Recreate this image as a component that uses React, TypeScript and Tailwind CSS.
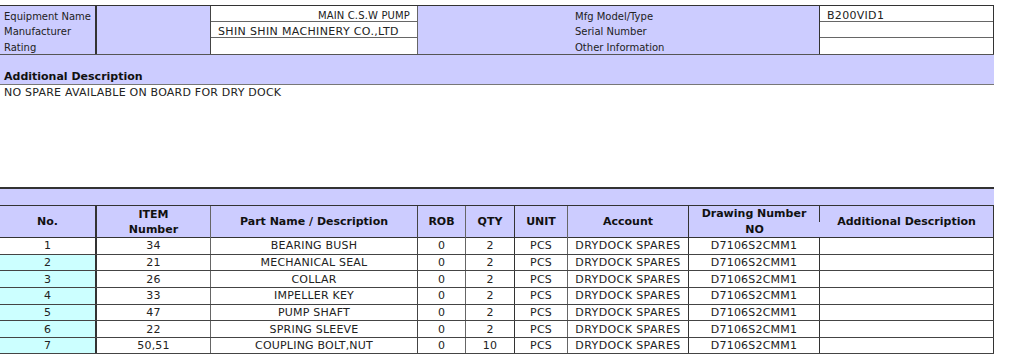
import React from "react";

const parts = [
  { no: "1", item: "34", name: "BEARING BUSH", qty: "2" },
  { no: "2", item: "21", name: "MECHANICAL SEAL", qty: "2" },
  { no: "3", item: "26", name: "COLLAR", qty: "2" },
  { no: "4", item: "33", name: "IMPELLER KEY", qty: "2" },
  { no: "5", item: "47", name: "PUMP SHAFT", qty: "2" },
  { no: "6", item: "22", name: "SPRING SLEEVE", qty: "2" },
  { no: "7", item: "50,51", name: "COUPLING BOLT,NUT", qty: "10" },
];

const cols = "grid grid-cols-[97px_114px_207px_48px_49px_53px_121px_131px_174px]";
const cell = "flex items-center justify-center";

export default function App() {
  return (
    <div className="w-[1024px] h-[363px] bg-white overflow-hidden pt-[5px] text-[10px] leading-none text-[#222] font-['DejaVu_Sans',Verdana,sans-serif]">
      {/* ── Equipment header ── */}
      <div className="w-[994px] grid grid-cols-[97px_114px_207px_402px_174px] border-t border-t-[#333] border-b border-b-[#555] bg-[#ccccff]">
        <div className="border-r-2 border-r-[#333] pl-[4px] flex flex-col">
          <div className="h-[16px] flex items-center pt-[5px]">Equipment Name</div>
          <div className="h-[16px] flex items-center pt-[3px]">Manufacturer</div>
          <div className="h-[16px] flex items-center pt-[3px]">Rating</div>
        </div>
        <div className="border-r border-r-[#444]" />
        <div className="bg-white border-r border-r-[#666] flex flex-col">
          <div className="h-[16px] border-b border-b-[#666] flex items-center justify-end pr-[7px] pt-[4px] tracking-[0.15px]">MAIN C.S.W PUMP</div>
          <div className="h-[16px] border-b border-b-[#666] flex items-center pl-[7px] pt-[3px] text-[11px] tracking-[0.35px]">SHIN SHIN MACHINERY CO.,LTD</div>
          <div className="h-[16px]" />
        </div>
        <div className="border-r border-r-[#333] pl-[157px] flex flex-col">
          <div className="h-[16px] flex items-center pt-[5px]">Mfg Model/Type</div>
          <div className="h-[16px] flex items-center pt-[3px]">Serial Number</div>
          <div className="h-[16px] flex items-center pt-[3px]">Other Information</div>
        </div>
        <div className="bg-white border-r border-r-[#333] flex flex-col">
          <div className="h-[16px] border-b border-b-[#666] flex items-center pl-[7px] pt-[4px] text-[11px] tracking-[0.3px]">B200VID1</div>
          <div className="h-[16px] border-b border-b-[#666]" />
          <div className="h-[16px]" />
        </div>
      </div>

      {/* ── Additional description ── */}
      <div className="w-[994px] h-[30px] bg-[#ccccff] border-b border-b-[#777] flex items-end pl-[4px]">
        <span className="text-[11px] font-bold text-[#111] leading-[14px]">Additional Description</span>
      </div>
      <div className="h-[15px] flex items-center pl-[4px] text-[11px] tracking-[0.22px]">NO SPARE AVAILABLE ON BOARD FOR DRY DOCK</div>

      {/* ── Spare parts ── */}
      <div className="mt-[87px] w-[994px]">
        <div className="h-[19px] bg-[#ccccff] border-t-2 border-t-[#333] border-b border-b-[#333]" />
        <div className={`${cols} h-[32px] bg-[#ccccff] border-b border-b-[#333] text-[11px] font-bold text-[#111] text-center leading-[15px]`}>
          <div className={`border-r-2 border-r-[#333] ${cell} pb-[1px]`}>No.</div>
          <div className="border-r border-r-[#666] flex flex-col items-center justify-center pb-[1px]">
            <span>ITEM</span>
            <span>Number</span>
          </div>
          <div className={`border-r border-r-[#444] ${cell} pb-[1px]`}>Part Name / Description</div>
          <div className={`border-r border-r-[#666] ${cell} pb-[1px]`}>ROB</div>
          <div className={`border-r border-r-[#333] ${cell} pb-[1px]`}>QTY</div>
          <div className={`border-r border-r-[#666] ${cell} pb-[1px]`}>UNIT</div>
          <div className={`border-r border-r-[#333] ${cell} pb-[1px]`}>Account</div>
          <div className="flex flex-col">
            <div className="h-[16px] border-r border-r-[#333] flex items-end justify-center pb-[1px]">Drawing Number</div>
            <div className="h-[16px] flex items-center justify-center pb-[1px]">NO</div>
          </div>
          <div className={`border-r border-r-[#333] ${cell} pb-[1px]`}>Additional Description</div>
        </div>
        {parts.map((p, i) => (
          <div key={p.no} className={`${cols} h-[16.65px] border-b border-b-[#444] text-center text-[11px] tracking-[0.2px]`}>
            <div className={`${i === 0 ? "bg-white" : "bg-[#ccffff]"} border-r-2 border-r-[#333] ${cell}`}>{p.no}</div>
            <div className={`border-r border-r-[#666] ${cell}`}>{p.item}</div>
            <div className={`border-r border-r-[#444] ${cell}`}>{p.name}</div>
            <div className={`border-r border-r-[#666] ${cell}`}>0</div>
            <div className={`border-r border-r-[#333] ${cell}`}>{p.qty}</div>
            <div className={`border-r border-r-[#666] ${cell}`}>PCS</div>
            <div className={`border-r border-r-[#333] ${cell} tracking-[0.4px]`}>DRYDOCK SPARES</div>
            <div className={`border-r border-r-[#333] ${cell}`}>D7106S2CMM1</div>
            <div className="border-r border-r-[#333]" />
          </div>
        ))}
      </div>
    </div>
  );
}
